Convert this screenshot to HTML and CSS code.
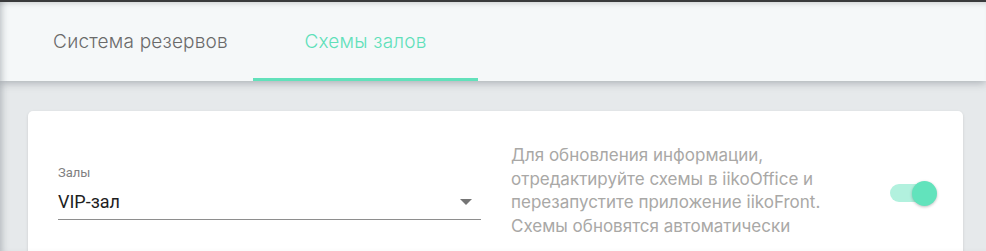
FILE: index.html
```html
<!DOCTYPE html>
<html lang="ru">
<head>
<meta charset="utf-8">
<title>Схемы залов</title>
<link rel="stylesheet" href="styles.css">
</head>
<body>
<div class="page">
  <header class="header">
    <nav class="tabs">
      <div class="tab">Система резервов</div>
      <div class="tab tab-active">Схемы залов</div>
    </nav>
  </header>
  <main class="main">
    <section class="card">
      <div class="field">
        <div class="field-label">Залы</div>
        <div class="field-control">
          <span class="field-value">VIP-зал</span>
          <span class="field-arrow"></span>
        </div>
      </div>
      <p class="hint">Для обновления информации,<br>отредактируйте схемы в iikoOffice и<br>перезапустите приложение iikoFront.<br>Схемы обновятся автоматически</p>
      <div class="toggle">
        <span class="toggle-track"></span>
        <span class="toggle-thumb"></span>
      </div>
    </section>
  </main>
  <div class="frame-shade"></div>
</div>
</body>
</html>
```

FILE: styles.css
```css
* { box-sizing: border-box; }
html, body { margin: 0; padding: 0; }
body {
  background: #e6e9eb;
  font-family: Inter, "Noto Sans", sans-serif;
  width: 986px;
  height: 251px;
  overflow: hidden;
}
.page {
  position: relative;
  height: 251px;
  overflow: hidden;
  border-top: 2px solid #3a3b3c;
}
.header {
  position: relative;
  z-index: 2;
  height: 79px;
  background: #f5f8f9;
  box-shadow: 0 2px 8px rgba(60, 70, 80, 0.35), inset 0 5px 5px -3px rgba(0, 0, 0, 0.12);
  padding-left: 28px;
  display: flex;
  align-items: stretch;
}
.tabs {
  display: flex;
}
.tab {
  width: 225px;
  display: flex;
  align-items: center;
  justify-content: center;
  font-size: 19px;
  font-weight: 350;
  color: #6a6a6a;
  letter-spacing: 0.2px;
  padding-top: 3px;
  border-bottom: 3px solid transparent;
}
.tab-active {
  color: #5fe0b9;
  border-bottom-color: #62e1bb;
}
.main {
  padding: 30px 23px 0 28px;
}
.card {
  background: #ffffff;
  border-radius: 5px;
  box-shadow: 0 1px 3px rgba(0, 0, 0, 0.12);
  height: 150px;
  padding: 33px 26px 0 30px;
  display: flex;
  align-items: flex-start;
}
.field {
  width: 423px;
  margin-top: 21px;
  font-family: Roboto, "Liberation Sans", sans-serif;
}
.field-label {
  font-size: 13px;
  color: #808080;
  line-height: 15px;
  margin-bottom: 9px;
}
.field-control {
  display: flex;
  align-items: center;
  justify-content: space-between;
  height: 31px;
  padding-bottom: 5px;
  border-bottom: 1px solid #8e8e8e;
}
.field-value {
  font-size: 18px;
  color: #1e1e1e;
}
.field-arrow {
  width: 0;
  height: 0;
  border-left: 6px solid transparent;
  border-right: 6px solid transparent;
  border-top: 6px solid #757575;
  margin-right: 9px;
}
.hint {
  margin: 0 0 0 30px;
  font-size: 17px;
  line-height: 23.7px;
  color: #a9a8a6;
  flex: 1;
}
.toggle {
  position: relative;
  width: 47px;
  height: 25px;
  margin-top: 37px;
}
.toggle-track {
  position: absolute;
  left: 0;
  top: 3px;
  width: 40px;
  height: 18px;
  border-radius: 9px;
  background: #b2f1de;
}
.toggle-thumb {
  position: absolute;
  right: 0;
  top: 0;
  width: 25px;
  height: 25px;
  border-radius: 50%;
  background: #62e3bc;
  box-shadow: 0 1px 3px rgba(0, 0, 0, 0.25);
}
.frame-shade {
  position: absolute;
  inset: 0;
  z-index: 3;
  pointer-events: none;
  box-shadow: inset 7px 0 7px -5px rgba(60, 70, 80, 0.3);
}
```
